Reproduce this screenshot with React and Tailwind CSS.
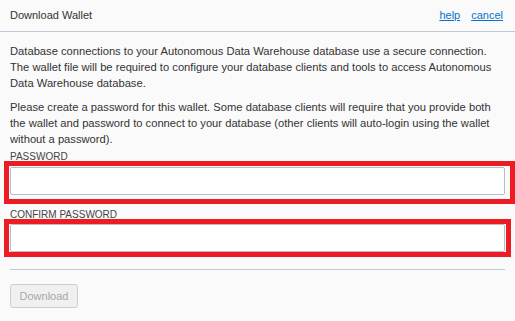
export default function App() {
  return (
    <div className="relative h-[321px] w-[515px] overflow-hidden bg-[#fafafa] font-['Liberation_Sans',Arial,sans-serif] text-[#333]">
      <div className="flex h-[32px] items-center justify-between border-b border-[#c3c8d0] pl-[10px] pr-[12px]">
        <span className="text-[11px]">Download Wallet</span>
        <div className="flex gap-[11px] text-[11px] text-[#0572ce]">
          <a href="#" className="underline">help</a>
          <a href="#" className="underline">cancel</a>
        </div>
      </div>

      <div className="px-[10px] pt-[11px]">
        <p className="whitespace-nowrap text-[11.2px] leading-[16px]">
          Database connections to your Autonomous Data Warehouse database use a secure connection.
          <br />
          The wallet file will be required to configure your database clients and tools to access Autonomous
          <br />
          Data Warehouse database.
        </p>
        <p className="mt-[8px] whitespace-nowrap text-[11.2px] leading-[16px]">
          Please create a password for this wallet. Some database clients will require that you provide both
          <br />
          the wallet and password to connect to your database (other clients will auto-login using the wallet
          <br />
          without a password).
        </p>

        <label className="mt-[4px] block text-[10px] leading-[12px] text-[#444]">PASSWORD</label>
        <input
          type="password"
          className="mt-[4px] block h-[28px] w-full rounded-[2px] border border-[#b8bec8] bg-white"
        />

        <label className="mt-[14px] block text-[10px] leading-[12px] text-[#444]">CONFIRM PASSWORD</label>
        <input
          type="password"
          className="mt-[3px] block h-[28px] w-full rounded-[2px] border border-[#b8bec8] bg-white"
        />

        <div className="mt-[17px] border-t border-[#c3c8d0]" />

        <button
          type="button"
          disabled
          className="mt-[14px] h-[24px] w-[68px] rounded-[3px] border border-[#c9ccd2] bg-[#f0f0f0] text-[11px] text-[#a8a8a8]"
        >
          Download
        </button>
      </div>

      <div className="pointer-events-none absolute left-[4px] top-[161px] h-[43px] w-[511px] border-[5px] border-[#ed1c24]" />
      <div className="pointer-events-none absolute left-[4px] top-[219px] h-[38px] w-[507px] border-[5px] border-[#ed1c24]" />
    </div>
  );
}
